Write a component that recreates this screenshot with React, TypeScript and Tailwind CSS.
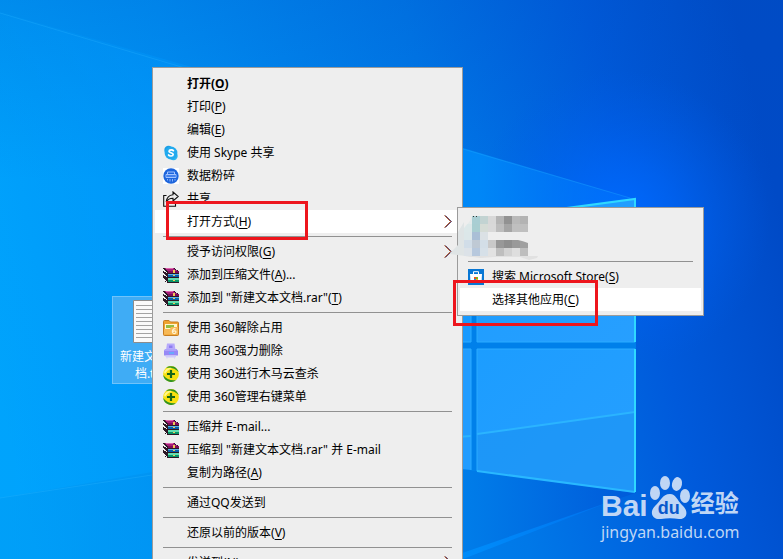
import type { ReactNode } from "react";

function Wallpaper() {
  return (
    <svg className="absolute inset-0 h-full w-full" viewBox="0 0 783 559" preserveAspectRatio="xMinYMin slice" aria-hidden="true">
      <defs>
        <linearGradient id="base" gradientUnits="userSpaceOnUse" x1="0" y1="400" x2="783" y2="220">
          <stop offset="0" stopColor="#00a4fc" />
          <stop offset="0.3" stopColor="#0092f5" />
          <stop offset="0.6" stopColor="#0078e8" />
          <stop offset="0.82" stopColor="#005adb" />
          <stop offset="1" stopColor="#004ac6" />
        </linearGradient>
        <radialGradient id="glow" gradientUnits="userSpaceOnUse" cx="620" cy="220" r="150">
          <stop offset="0" stopColor="#006aff" />
          <stop offset="0.4" stopColor="#0066fa" stopOpacity="0.6" />
          <stop offset="1" stopColor="#005ce8" stopOpacity="0" />
        </radialGradient>
        <linearGradient id="topShade" x1="0" y1="0" x2="0" y2="1">
          <stop offset="0" stopColor="#0050c0" stopOpacity="0.22" />
          <stop offset="1" stopColor="#0050c0" stopOpacity="0" />
        </linearGradient>
        <linearGradient id="beam" gradientUnits="userSpaceOnUse" x1="0" y1="0" x2="640" y2="0">
          <stop offset="0" stopColor="#00a0ff" stopOpacity="0.15" />
          <stop offset="0.75" stopColor="#0090ff" stopOpacity="0.7" />
          <stop offset="1" stopColor="#0078ff" stopOpacity="0.3" />
        </linearGradient>
        <linearGradient id="floor" gradientUnits="userSpaceOnUse" x1="0" y1="0" x2="620" y2="0">
          <stop offset="0" stopColor="#009cf4" stopOpacity="0.5" />
          <stop offset="0.75" stopColor="#007ae6" stopOpacity="0.85" />
          <stop offset="1" stopColor="#0056d4" stopOpacity="0.7" />
        </linearGradient>
        <linearGradient id="pane" x1="0" y1="0" x2="1" y2="1">
          <stop offset="0" stopColor="#1c9dff" />
          <stop offset="1" stopColor="#279fff" />
        </linearGradient>
      </defs>
      <rect width="783" height="559" fill="url(#base)" />
      <rect width="783" height="180" fill="url(#topShade)" />
      <rect x="440" width="343" height="460" fill="url(#glow)" />
      <path d="M0 12L195 68L463 148L635 199V492L463 559H0Z" fill="url(#beam)" />
      <path d="M0 13L195 71L463 149L630 198" fill="none" stroke="#28b2ff" strokeOpacity="0.3" />
      <path d="M0 498L152 472L463 420L463 469L635 493L445 559H0Z" fill="url(#floor)" />
      <path d="M0 498L152 475" stroke="#2ab5ff" strokeOpacity="0.3" />
      <path d="M400 315H636V492L477 471L400 462Z" fill="#0080ea" />
      <path d="M400 349H471V470L400 462Z" fill="#219cff" />
      <path d="M400 218L471 210V342H400Z" fill="#189aff" />
      <path d="M477 220L635 199V342H477Z" fill="url(#pane)" />
      <path d="M477 349H635V492L477 471Z" fill="url(#pane)" />
      <path d="M477 434L635 412V492L477 471Z" fill="#1a90f2" fillOpacity="0.5" />
      <path d="M400 441L471 436M477 434L635 412" fill="none" stroke="#2bb4ff" strokeWidth="2" />
      <path d="M471 315V342H400M471 470V349H400M477 315V342H635M477 471V349H635" fill="none" stroke="#2babff" />
      <path d="M477 471L635 492" stroke="#29b8ff" strokeWidth="2" />
      <path d="M477 220L635 199V342M635 349V492" fill="none" stroke="#2fd8ff" strokeWidth="2" />
    </svg>
  );
}

const iconSize = "h-4 w-4 shrink-0";

function SkypeIcon() {
  return (
    <svg className={iconSize} viewBox="0 0 16 16" aria-hidden="true">
      <circle cx="5.5" cy="5" r="4.2" fill="#1b9fe6" />
      <circle cx="10.5" cy="11" r="4.2" fill="#2cb6f0" />
      <circle cx="8" cy="8" r="6.4" fill="#22aaee" />
      <path d="M10.4 5.7C9.8 4.7 6.2 4.4 6 6.3C5.9 8.1 10.2 7.3 10.2 9.5C10.1 11.5 6.3 11.3 5.6 10" fill="none" stroke="#fff" strokeWidth="1.7" strokeLinecap="round" />
    </svg>
  );
}

function ShredIcon() {
  return (
    <svg className={iconSize} viewBox="0 0 16 16" aria-hidden="true">
      <path d="M0 0H16V16H0Z" fill="#fff" />
      <circle cx="8" cy="8" r="7.7" fill="#1d65dc" />
      <path d="M4.5 6V4H11.5V6M3 9.5V6.5H13V9.5Z" fill="none" stroke="#a2c4ff" />
      <path d="M4.5 11V12.5M7 11V13.5M9.5 11V13.5M12 11V12.5" stroke="#8db5fb" />
      <path d="M4 8H12" stroke="#6da1ff" />
    </svg>
  );
}

function ShareIcon() {
  return (
    <svg className={iconSize} viewBox="0 0 16 16" fill="none" stroke="#111" strokeWidth="1.1" aria-hidden="true">
      <path d="M3.5 4.5H0.7V15.3H12.5V11" />
      <path d="M10 1L15.2 5.5L10 10V7.3C6.5 7.2 4.8 8.5 3.2 11C3.7 6.5 6 4 10 3.7Z" />
    </svg>
  );
}

function RarIcon() {
  return (
    <svg className={iconSize} viewBox="0 0 16 16" shapeRendering="crispEdges" aria-hidden="true">
      <path d="M0 1H11L16 4V16H5L0 13Z" fill="#2b1826" />
      <path d="M1 1H10L15 4H5Z" fill="#a51d78" />
      <path d="M2 1H9L11 2H4Z" fill="#dc68b0" />
      <path d="M5 4H16V6H5Z" fill="#7d0c58" />
      <path d="M0 2L4 5V6L0 4ZM0 6L4 9V10L0 8ZM0 11L4 14V15L0 13Z" fill="#f2f2f2" />
      <path d="M5 7H16V8H5Z" fill="#5ab2e6" />
      <path d="M5 8H16V10H5Z" fill="#075fa9" />
      <path d="M5 11H16V13H5Z" fill="#62dfb0" />
      <path d="M5 13H16V15H5Z" fill="#089568" />
      <path d="M10 3H12V6H10ZM10 8H12V9H10ZM10 13H12V14H10Z" fill="#efcb55" />
    </svg>
  );
}

function FolderIcon() {
  return (
    <svg className={iconSize} viewBox="0 0 16 16" aria-hidden="true">
      <path d="M0.5 1.5Q0.5 0.5 1.5 0.5H6L7.5 2H14.5Q15.5 2 15.5 3V14.5Q15.5 15.5 14.5 15.5H1.5Q0.5 15.5 0.5 14.5Z" fill="#efa32f" stroke="#c77d22" />
      <path d="M2 4H14V10H2Z" fill="#fff6cf" />
      <path d="M3 5H11V8H3Z" fill="#94bd42" />
      <path d="M1 9H7L8 7H15V14.5H1Z" fill="#f7b956" />
      <path d="M12.5 8.7C10 8.5 9.3 10 9.4 12C9.6 14.2 13 14 13 12C13 10.5 10.5 10.4 9.8 11.6" fill="none" stroke="#fff4d5" strokeWidth="1.2" />
    </svg>
  );
}

function DeleteIcon() {
  return (
    <svg className={iconSize} viewBox="0 0 16 16" aria-hidden="true">
      <path d="M4 0.5H11.5L12.5 7H3Z" fill="#b6a9fb" />
      <path d="M6 2.5H9.5V5H6Z" fill="#8e7cf0" />
      <path d="M2 6H13.5L15 8V12.5H1V8Z" fill="#9789f6" />
      <path d="M2 7H13.5" stroke="#c5bcff" />
      <path d="M6 10H11" stroke="#58b6ff" strokeWidth="1.5" />
      <path d="M3 13H12.5V14H3ZM4 14.5V15.5M11.5 14.5V15.5" fill="#cfc9fb" stroke="#d0cafa" />
    </svg>
  );
}

function PlusIcon() {
  return (
    <svg className={iconSize} viewBox="0 0 16 16" aria-hidden="true">
      <circle cx="8" cy="8" r="7.9" fill="#f7e010" />
      <path d="M3 2A7.9 7.9 0 0 1 15.6 6C12.5 2 7 1 3 2ZM.2 9A7.9 7.9 0 0 0 13 14.2C8 15 3 13 .2 9Z" fill="#2f9324" />
      <path d="M1 6Q4 1 9 2Q4 4 2 8Z" fill="#fff78a" />
      <path d="M8 4V12M4 8H12" stroke="#17651a" strokeWidth="2.2" />
    </svg>
  );
}

function StoreIcon() {
  return (
    <svg className={iconSize} viewBox="0 0 16 16" aria-hidden="true">
      <path d="M0 0H16V16H0Z" fill="#0877d4" />
      <path d="M5.5 5.5V2.7H10.5V5.5" fill="none" stroke="#fff" />
      <path d="M2 5H14L13.5 14H2.5Z" fill="#fff" />
      <path d="M6 8H8V10H6Z" fill="#ee5027" />
      <path d="M8 8H10V10H8Z" fill="#78b51e" />
      <path d="M6 10H8V12H6Z" fill="#1699e8" />
      <path d="M8 10H10V12H8Z" fill="#f5b415" />
    </svg>
  );
}

function Chevron() {
  return (
    <svg className="ml-auto h-4 w-2 shrink-0" viewBox="0 0 8 16" fill="none" aria-hidden="true">
      <path d="M0.5 1.5L6.5 7.5L0.5 13.5" stroke="#e8923a" />
      <path d="M1.5 1.5L7.5 7.5L1.5 13.5" stroke="#5b7fc8" />
      <path d="M1 1.5L7 7.5L1 13.5" stroke="#6a1a24" />
    </svg>
  );
}

type ItemProps = {
  icon?: ReactNode;
  label: string;
  hotkey?: string;
  tail?: string;
  bold?: boolean;
  active?: boolean;
  submenu?: boolean;
};

function Item({ icon, label, hotkey, tail, bold, active, submenu }: ItemProps) {
  return (
    <button
      type="button"
      role="menuitem"
      className={`flex h-[23px] w-full items-center gap-2 px-2 text-left whitespace-nowrap ${active ? "bg-white" : ""} ${bold ? "font-bold" : ""}`}
    >
      {icon ?? <span className="w-4 shrink-0" />}
      <span>
        {label}
        {hotkey && (
          <>
            (<span className="underline underline-offset-2">{hotkey}</span>)
          </>
        )}
        {tail}
      </span>
      {submenu && <Chevron />}
    </button>
  );
}

function Separator() {
  return <hr className="mx-2 my-[3px] border-t border-[#919191]" />;
}

function Mosaic() {
  const rows = [
    ["#e4ebeb", "#a9ced3", "#c2d3d2", "#d8d8d8", "#b4b4b4", "#929292", "#b9b9b9", "#b3b3b3"],
    ["#dce8e9", "#a9ced1", "#d5dcd6", "#d9d9d9", "#bdbdbd", "#a5a5a5", "#bfbfbf", "#bfbfbf"],
    ["#dce7e9", "#aabfd6", "#dbe1e5", "#eeeeee", "#eeeeee", "#eeeeee", "#eeeeee", "#eeeeee"],
    ["#d1dde8", "#bfc9d4", "#d3dee7", "#c9c9c9", "#989898", "#8e8e8e", "#999999", "#a0a0a0"],
    ["#dce2e8", "#b7c8dd", "#d6e0e8", "#e2e2e2", "#bebebe", "#d2d2d2", "#dedede", "#bebebe"],
  ];
  return (
    <svg className="pointer-events-none absolute top-2 -left-2 h-14 w-28" viewBox="0 0 112 56" aria-hidden="true">
      <path d="M0 37L8 29V16L14 6L23 3V41L0 38Z" fill="#dfe4e5" />
      <path d="M15 40H76L88 40L87 42L79 44L70 41H44L31 42Z" fill="#e1e1e1" />
      {rows.map((row, y) => row.map((fill, x) => <rect key={`${x}-${y}`} x={14 + x * 8} y={y * 8} width="8" height="8" fill={fill} />))}
      <path d="M14 0H22L20 5L14 12Z" fill="#eeeeee" />
      <path d="M23 1L24 0M26 1L27 0" stroke="#333" />
      <path d="M68 24H78V27Q73 25 68 24Z" fill="#eeeeee" />
    </svg>
  );
}

function BaiduMark() {
  return (
    <div className="absolute top-[475px] left-[601px] font-['Noto_Sans','Noto_Sans_CJK_SC',sans-serif] text-[#bfd6f5]">
      <div className="flex h-[46px] items-end">
        <span className="font-['Liberation_Sans',sans-serif] text-[30px] leading-[30px] font-bold">Bai</span>
        <span className="relative block h-[46px] w-[42px]">
          <svg className="h-full w-full" viewBox="0 0 42 46" fill="currentColor" aria-hidden="true">
            <ellipse cx="7" cy="18" rx="5" ry="7" />
            <ellipse cx="17" cy="8" rx="5" ry="7" />
            <ellipse cx="29" cy="9" rx="5" ry="7" transform="rotate(12 29 9)" />
            <ellipse cx="37" cy="21" rx="5" ry="7" />
            <path d="M22 19C28 19 29 25 34 30C42 37 38 45 31 44C25 43 19 43 13 44C4 45 1 37 7 31C13 26 14 19 22 19Z" />
          </svg>
          <span className="absolute inset-x-0 bottom-1 text-center font-['Liberation_Sans',sans-serif] text-[18px] leading-[18px] font-bold text-[#0758cc]">du</span>
        </span>
        <span className="ml-px h-[30px] text-[24px] leading-6 font-bold">经验</span>
      </div>
      <div className="mt-px text-[16px] leading-5">jingyan.baidu.com</div>
    </div>
  );
}

export default function App() {
  return (
    <main className="relative h-screen w-full overflow-hidden bg-[#0078e8] font-['Noto_Sans','Noto_Sans_CJK_SC',sans-serif] text-[12px] leading-4 text-black">
      <Wallpaper />

      <button type="button" className="absolute top-[296px] left-[112px] flex h-[88px] w-[76px] flex-col items-center border border-[#70c3fa] bg-[#3facf5] pt-[3px] text-white">
        <svg className="h-[43px] w-[34px] shrink-0" viewBox="0 0 34 43" aria-hidden="true">
          <path d="M0.5 0.5H33.5V42.5H0.5Z" fill="#fafafa" stroke="#8c8c8c" />
          <path d="M3 5.5H31M3 9.5H31M3 13.5H31M3 17.5H31M3 21.5H31M3 25.5H31M3 29.5H31M3 33.5H31M3 37.5H31" stroke="#a3a3a3" />
        </svg>
        <span className="mt-[5px] leading-[17px]">
          新建文本文
          <br />
          档.txt
        </span>
      </button>

      <div role="menu" aria-label="文件" className="absolute top-[67px] left-[152px] w-[311px] border border-[#9b9b9b] bg-[#eeeeee] px-[2px] py-1">
        <Item label="打开" hotkey="O" bold />
        <Item label="打印" hotkey="P" />
        <Item label="编辑" hotkey="E" />
        <Item icon={<SkypeIcon />} label="使用 Skype 共享" />
        <Item icon={<ShredIcon />} label="数据粉碎" />
        <Item icon={<ShareIcon />} label="共享" />
        <Item label="打开方式" hotkey="H" active submenu />
        <Separator />
        <Item label="授予访问权限" hotkey="G" submenu />
        <Item icon={<RarIcon />} label="添加到压缩文件" hotkey="A" tail="..." />
        <Item icon={<RarIcon />} label={'添加到 "新建文本文档.rar"'} hotkey="T" />
        <Separator />
        <Item icon={<FolderIcon />} label="使用 360解除占用" />
        <Item icon={<DeleteIcon />} label="使用 360强力删除" />
        <Item icon={<PlusIcon />} label="使用 360进行木马云查杀" />
        <Item icon={<PlusIcon />} label="使用 360管理右键菜单" />
        <Separator />
        <Item icon={<RarIcon />} label="压缩并 E-mail..." />
        <Item icon={<RarIcon />} label={'压缩到 "新建文本文档.rar" 并 E-mail'} />
        <Item label="复制为路径" hotkey="A" />
        <Separator />
        <Item label="通过QQ发送到" />
        <Separator />
        <Item label="还原以前的版本" hotkey="V" />
        <Separator />
        <Item label="发送到" hotkey="N" submenu />
      </div>

      <div role="menu" aria-label="打开方式" className="absolute top-[207px] left-[457px] w-[247px] border border-[#9b9b9b] bg-[#eeeeee] px-[2px] py-1">
        <Mosaic />
        <Item label="" />
        <Item label="" />
        <Separator />
        <Item icon={<StoreIcon />} label="搜索 Microsoft Store" hotkey="S" />
        <Item label="选择其他应用" hotkey="C" active />
      </div>

      <div className="pointer-events-none absolute top-[201px] left-[166px] h-[39px] w-[142px] border-3 border-[#ed151d]" />
      <div className="pointer-events-none absolute top-[280px] left-[453px] h-[46px] w-[145px] border-3 border-[#ed151d]" />

      <BaiduMark />
    </main>
  );
}
